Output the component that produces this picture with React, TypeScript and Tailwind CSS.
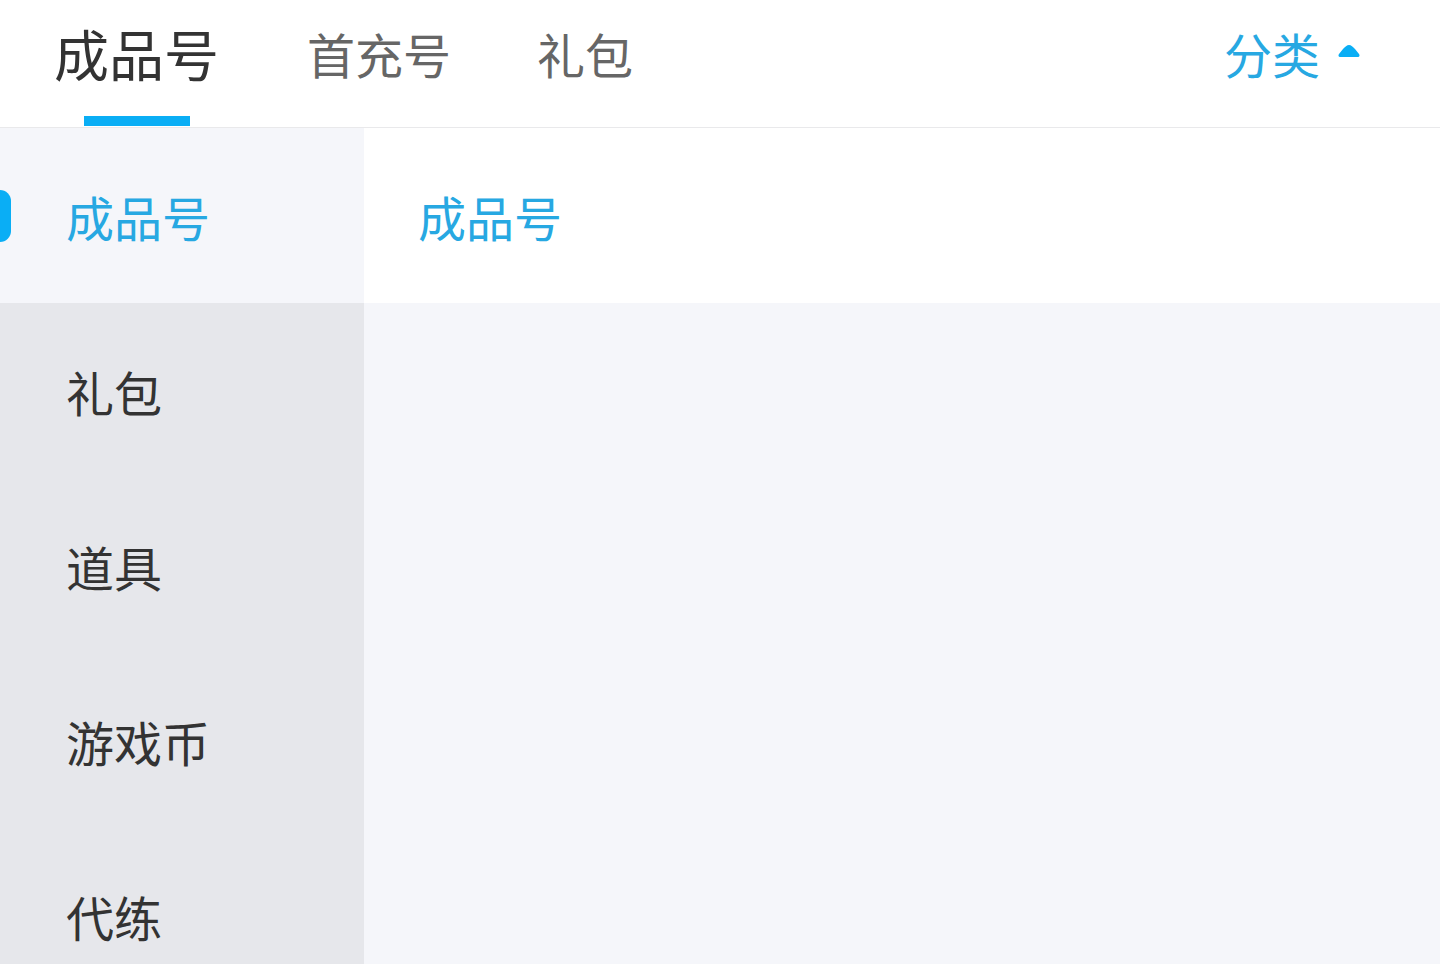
import React from "react";

const sideItems = ["成品号", "礼包", "道具", "游戏币", "代练"];

export default function App() {
  const active = 0;

  return (
    <div
      className="flex h-[964px] w-[1440px] flex-col overflow-hidden bg-white"
      style={{ fontFamily: '"Noto Sans CJK SC", "Noto Sans", sans-serif' }}
    >
      {/* Top tabs */}
      <div className="flex h-[128px] shrink-0 items-stretch border-b border-[#e9e9eb] bg-white pl-[54px] pr-[80px]">
        <div className="relative flex items-center pb-[22px]">
          <span className="text-[55px] leading-none text-[#333333]">成品号</span>
          <span className="absolute bottom-[1px] left-1/2 h-[10px] w-[106px] -translate-x-1/2 bg-[#0aaef5]" />
        </div>
        <div className="ml-[88px] flex items-center pb-[22px]">
          <span className="text-[48px] leading-none text-[#666666]">首充号</span>
        </div>
        <div className="ml-[86px] flex items-center pb-[22px]">
          <span className="text-[48px] leading-none text-[#666666]">礼包</span>
        </div>
        <div className="ml-auto flex items-center gap-[18px] pb-[22px]">
          <span className="text-[48px] leading-none text-[#27a8e2]">分类</span>
          <svg width="22" height="14" viewBox="0 0 22 14" className="mb-[4px]">
            <path d="M11 1 C13 1 15 3 17 5 L21 10 C22 11 21.5 13 20 13 L2 13 C0.5 13 0 11 1 10 L5 5 C7 3 9 1 11 1 Z" fill="#0aaef5" />
          </svg>
        </div>
      </div>

      <div className="flex flex-1 overflow-hidden">
        {/* Sidebar */}
        <div className="flex w-[364px] shrink-0 flex-col bg-[#e6e7eb]">
          {sideItems.map((item, i) => (
            <div
              key={item}
              className={
                i === active
                  ? "relative flex h-[175px] shrink-0 items-center bg-[#f5f6fa] pl-[66px]"
                  : "flex h-[175px] shrink-0 items-center pl-[66px]"
              }
            >
              {i === active && (
                <span className="absolute left-0 top-1/2 h-[52px] w-[11px] -translate-y-1/2 rounded-r-full bg-[#0aaef5]" />
              )}
              <span
                className={
                  i === active
                    ? "text-[48px] leading-none text-[#27a8e2]"
                    : "text-[48px] leading-none text-[#333333]"
                }
              >
                {item}
              </span>
            </div>
          ))}
        </div>

        {/* Content */}
        <div className="flex flex-1 flex-col bg-[#f5f6fa]">
          <div className="flex h-[175px] shrink-0 items-center bg-white pl-[54px]">
            <span className="text-[48px] leading-none text-[#27a8e2]">成品号</span>
          </div>
        </div>
      </div>
    </div>
  );
}
